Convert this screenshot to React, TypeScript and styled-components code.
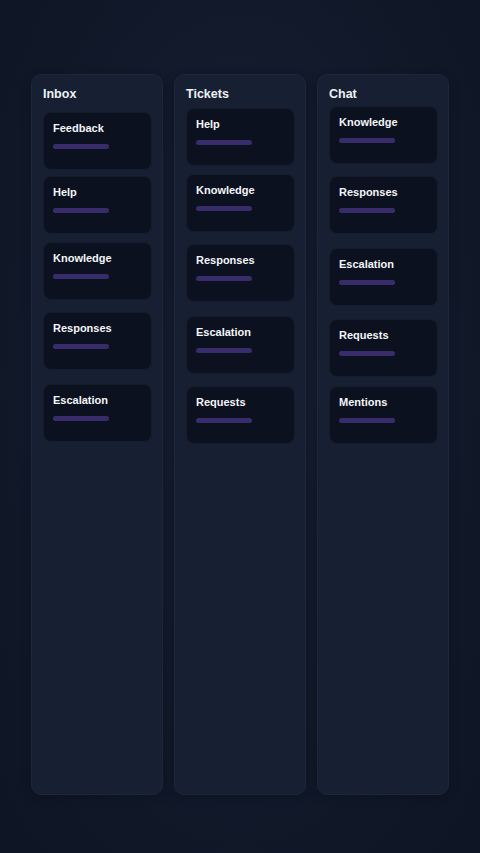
import React from 'react'
import styled, { createGlobalStyle } from 'styled-components'

const GlobalStyle = createGlobalStyle`
  html, body {
    margin: 0;
    padding: 0;
    background: #10172a;
  }
  body {
    font-family: "Liberation Sans", Arial, sans-serif;
  }
`

type CardData = { title: string; offset: number }
type ColumnData = { name: string; cards: CardData[] }

const columns: ColumnData[] = [
  {
    name: 'Inbox',
    cards: [
      { title: 'Feedback', offset: 6 },
      { title: 'Help', offset: 6 },
      { title: 'Knowledge', offset: 8 },
      { title: 'Responses', offset: 12 },
      { title: 'Escalation', offset: 14 },
    ],
  },
  {
    name: 'Tickets',
    cards: [
      { title: 'Help', offset: 2 },
      { title: 'Knowledge', offset: 8 },
      { title: 'Responses', offset: 12 },
      { title: 'Escalation', offset: 14 },
      { title: 'Requests', offset: 12 },
    ],
  },
  {
    name: 'Chat',
    cards: [
      { title: 'Knowledge', offset: 0 },
      { title: 'Responses', offset: 12 },
      { title: 'Escalation', offset: 14 },
      { title: 'Requests', offset: 13 },
      { title: 'Mentions', offset: 9 },
    ],
  },
]

const App = () => {
  return (
    <>
      <GlobalStyle />
      <Page>
        <Board>
          {columns.map((col) => (
            <Column key={col.name}>
              <ColumnTitle>{col.name}</ColumnTitle>
              {col.cards.map((card, i) => (
                <Card key={i} $offset={card.offset}>
                  <CardTitle>{card.title}</CardTitle>
                  <Bar />
                </Card>
              ))}
            </Column>
          ))}
        </Board>
      </Page>
    </>
  )
}

const Page = styled.div`
  width: 480px;
  height: 853px;
  box-sizing: border-box;
  padding: 74px 31px 0 31px;
  background: radial-gradient(ellipse at 50% 45%, #161e30 0%, #121a2b 50%, #0e1524 100%);
`

const Board = styled.div`
  display: grid;
  grid-template-columns: repeat(3, 1fr);
  gap: 11px;
`

const Column = styled.div`
  height: 721px;
  box-sizing: border-box;
  padding: 11px 10px 0 11px;
  background: #162032;
  border: 1px solid #1c2739;
  border-radius: 10px;
  box-shadow: 0 2px 10px rgba(0, 0, 0, 0.25);
  display: flex;
  flex-direction: column;
`

const ColumnTitle = styled.h2`
  margin: 0 0 4px 0;
  font-size: 12.5px;
  line-height: 16px;
  font-weight: 700;
  color: #eef1f6;
`

const Card = styled.div<{ $offset: number }>`
  margin-top: ${(p) => p.$offset}px;
  height: 58px;
  box-sizing: border-box;
  padding: 8px 9px;
  background: #0c111f;
  border: 1px solid #151d2d;
  border-radius: 8px;
`

const CardTitle = styled.div`
  font-size: 11px;
  line-height: 14px;
  font-weight: 700;
  color: #f3f5f9;
`

const Bar = styled.div`
  margin-top: 9px;
  width: 56px;
  height: 5px;
  border-radius: 3px;
  background: #392c6b;
`

export default App
